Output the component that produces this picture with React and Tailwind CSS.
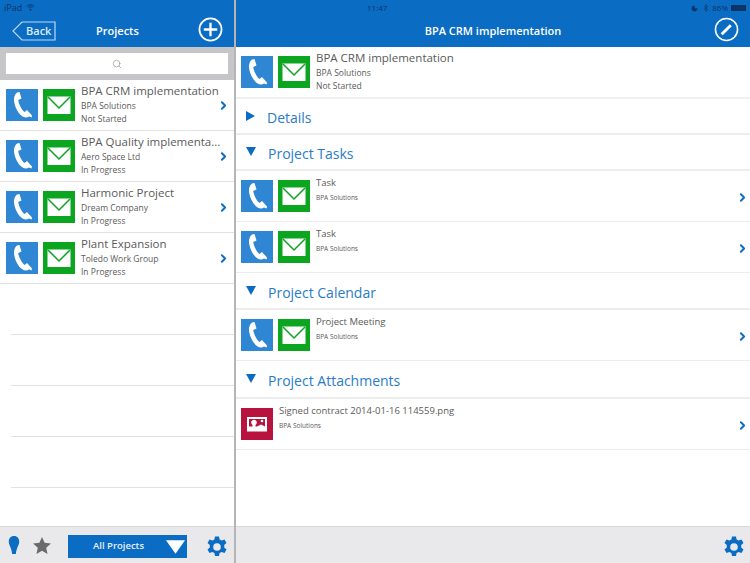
import { ChevronRight, Search, Moon, Bluetooth } from "lucide-react";

const font = { fontFamily: '"Open Sans", "Noto Sans", sans-serif' };

function PhoneIcon() {
  return (
    <div className="w-8 h-8 shrink-0 bg-[#2f86d2] flex items-center justify-center">
      <svg viewBox="0 0 32 32" className="w-8 h-8">
        <path
          d="M11 3.500 C8.500 5.500 7.500 9 8.200 13 C9.200 19 12.500 25 17 27.800 C19.500 29 21.500 28.500 23 27.500 L25.500 28.500 L26 26.500 L21 21 L18.500 23 C15.500 20.500 12.800 15 12.200 11 L15.500 9.500 L13.500 3 Z"
          fill="#fff"
        />
      </svg>
    </div>
  );
}

function MailIcon() {
  return (
    <div className="w-8 h-8 shrink-0 bg-[#0ca520] flex items-center justify-center">
      <svg viewBox="0 0 32 32" className="w-8 h-8">
        <rect x="4.500" y="7.500" width="23" height="17.500" fill="#fff" />
        <path d="M5 8 L16 19 L27 8" fill="none" stroke="#0ca520" strokeWidth="1.500" />
      </svg>
    </div>
  );
}

function ImageIcon() {
  return (
    <div className="w-8 h-8 shrink-0 bg-[#b8123f] flex items-center justify-center">
      <svg viewBox="0 0 32 32" className="w-8 h-8">
        <rect x="6" y="9" width="20" height="14.500" fill="#fff" />
        <rect x="8" y="11" width="16" height="8.500" fill="#b8123f" />
        <path d="M8 20 h16 v-1.500 l-4 -2 l-4 2 h-1.500 v-1.500 a2.800 2.800 0 1 0 -3 0 v1.500 h-3.500 Z" fill="#fff" />
        <circle cx="21" cy="13" r="1.300" fill="#fff" />
      </svg>
    </div>
  );
}

function Gear({ className }) {
  return (
    <svg viewBox="0 0 24 24" className={className}>
      <path
        fillRule="evenodd"
        fill="#0b6cc4"
        d="M10 1.500 h4 l.6 3 a8 8 0 0 1 2 1.100 l2.900 -1 2 3.500 -2.300 2 a8 8 0 0 1 0 2.300 l2.300 2 -2 3.500 -2.900 -1 a8 8 0 0 1 -2 1.100 l-.6 3 h-4 l-.6 -3 a8 8 0 0 1 -2 -1.100 l-2.900 1 -2 -3.500 2.300 -2 a8 8 0 0 1 0 -2.300 l-2.300 -2 2 -3.500 2.900 1 a8 8 0 0 1 2 -1.100 Z M12 8.200 a3.800 3.800 0 1 0 0 7.600 a3.800 3.800 0 1 0 0 -7.600 Z"
      />
    </svg>
  );
}

function ProjectRow({ title, company, status }) {
  return (
    <div className="h-[51px] flex items-center pl-[6px] pr-[4px] border-b border-[#e2e2e2]">
      <div className="flex gap-[5px]">
        <PhoneIcon />
        <MailIcon />
      </div>
      <div className="ml-[6px] flex-1 min-w-0 -mt-[2px] text-[#5a5a5a]">
        <div className="text-[11.500px] leading-[15px] whitespace-nowrap">{title}</div>
        <div className="text-[8.500px] leading-[13px] mt-[1px]">{company}</div>
        <div className="text-[8.500px] leading-[13px]">{status}</div>
      </div>
      <ChevronRight className="w-[13px] h-[13px] text-[#0b6cc4] shrink-0" strokeWidth={3.500} />
    </div>
  );
}

function ItemRow({ title, company, icon }) {
  return (
    <div className="h-[51px] flex items-center pl-[5px] pr-[1px] border-b border-[#ececec]">
      {icon === "image" ? (
        <ImageIcon />
      ) : (
        <div className="flex gap-[5px]">
          <PhoneIcon />
          <MailIcon />
        </div>
      )}
      <div className="ml-[6px] flex-1 self-start pt-[5px] text-[#5a5a5a]">
        <div className="text-[9.500px] leading-[14px]">{title}</div>
        <div className="text-[6.500px] leading-[10px] mt-[3px]">{company}</div>
      </div>
      <ChevronRight className="w-[13px] h-[13px] text-[#0b6cc4] shrink-0 mt-[3px]" strokeWidth={3.500} />
    </div>
  );
}

function Section({ title, open, height }) {
  return (
    <div className={`flex items-center pl-[10px] pt-[3px] border-b-2 border-[#ececec] ${height}`}>
      {open ? (
        <svg viewBox="0 0 10 9" className="w-[10px] h-[9px] -mt-[4px]">
          <path d="M0 0 H10 L5 9 Z" fill="#0b6cc4" />
        </svg>
      ) : (
        <svg viewBox="0 0 9 10" className="w-[9px] h-[10px] -mt-[3px]">
          <path d="M0 0 L9 5 L0 10 Z" fill="#0b6cc4" />
        </svg>
      )}
      <span className="ml-[12px] text-[14px] text-[#2a7cc7]">{title}</span>
    </div>
  );
}

export default function App() {
  return (
    <div style={font} className="w-[750px] h-[563px] flex bg-white overflow-hidden">
      {/* Left panel */}
      <div className="w-[234px] shrink-0 flex flex-col">
        <div className="h-[47px] bg-[#0b6cc4] flex flex-col">
          <div className="h-[15px] flex items-center gap-1 pl-[4px] text-[9px] text-[#0a3566]">
            iPad
            <svg viewBox="0 0 12 9" className="w-[9px] h-[7px]">
              <path d="M1 3 a7 7 0 0 1 10 0 M3 5 a4 4 0 0 1 6 0" fill="none" stroke="#0a3566" strokeWidth="1.300" />
              <circle cx="6" cy="7.400" r="1.200" fill="#0a3566" />
            </svg>
          </div>
          <div className="flex-1 relative">
            <div className="absolute left-[12px] top-[6px] flex items-center">
              <svg viewBox="0 0 44 20" className="w-[44px] h-[20px]">
                <path d="M10 1 H43 V19 H10 L1 10 Z" fill="none" stroke="#bcd9f3" strokeWidth="1.200" />
              </svg>
              <span className="absolute left-[14px] text-[11px] text-[#dcebf8] font-semibold">Back</span>
            </div>
            <div className="absolute left-[96px] top-[8px] text-[11px] font-semibold text-white">Projects</div>
            <svg viewBox="0 0 26 26" className="absolute left-[198px] top-[2px] w-[25px] h-[25px]">
              <circle cx="13" cy="13" r="11.500" fill="none" stroke="#fff" strokeWidth="1.800" />
              <path d="M13 6 V20 M6 13 H20" stroke="#fff" strokeWidth="2.400" />
            </svg>
          </div>
        </div>

        <div className="h-[33px] bg-[#c6c6c8] flex items-center px-[6px]">
          <div className="h-[21px] w-full bg-white flex items-center justify-center">
            <Search className="w-[10px] h-[10px] text-[#a8a8a8]" />
          </div>
        </div>

        <div className="flex-1 flex flex-col">
          <ProjectRow title="BPA CRM implementation" company="BPA Solutions" status="Not Started" />
          <ProjectRow title="BPA Quality implementa..." company="Aero Space Ltd" status="In Progress" />
          <ProjectRow title="Harmonic Project" company="Dream Company" status="In Progress" />
          <ProjectRow title="Plant Expansion" company="Toledo Work Group" status="In Progress" />
          <div className="ml-[11px] flex flex-col">
            {[0, 1, 2, 3].map((i) => (
              <div key={i} className="h-[51px] border-b border-[#e2e2e2]" />
            ))}
          </div>
        </div>

        <div className="h-[37px] bg-[#e9e9ec] border-t border-[#d8d8d8] flex items-center">
          <svg viewBox="0 0 12 20" className="ml-[8px] w-[12px] h-[19px]">
            <path d="M6 0 C2.500 0 .5 2.500 .5 6 C.5 10 3.500 12 4 19 H8 C8.500 12 11.500 10 11.500 6 C11.500 2.500 9.500 0 6 0 Z" fill="#0b6cc4" />
          </svg>
          <svg viewBox="0 0 20 19" className="ml-[13px] w-[18px] h-[17px]">
            <path d="M10 0 L12.900 6.300 L20 7.200 L14.700 11.900 L16.200 19 L10 15.400 L3.800 19 L5.300 11.900 L0 7.200 L7.100 6.300 Z" fill="#6a6a6a" />
          </svg>
          <div className="ml-[17px] mt-[3px] w-[119px] h-[23px] bg-[#0b6cc4] flex items-center relative">
            <span className="ml-[25px] text-[9.500px] font-semibold text-[#e6f0fa]">All Projects</span>
            <svg viewBox="0 0 20 14" className="absolute right-[2px] top-[5px] w-[19px] h-[14px]">
              <path d="M0 0 H20 L10 14 Z" fill="#fff" />
            </svg>
          </div>
          <Gear className="ml-[18px] mt-[3px] w-[24px] h-[24px]" />
        </div>
      </div>

      <div className="w-[2px] shrink-0 bg-[#b5b5b8]" />

      {/* Right panel */}
      <div className="flex-1 flex flex-col min-w-0">
        <div className="h-[47px] bg-[#0b6cc4] relative flex flex-col">
          <div className="h-[15px] flex items-center pl-[131px] text-[8px] text-[#0a3566]">11:47</div>
          <div className="absolute right-[4px] top-[2px] flex items-center gap-[2px] text-[8px] text-[#0a3566]">
            <Moon className="w-[7px] h-[7px] mr-[2px]" fill="#0a3566" />
            <Bluetooth className="w-[8px] h-[8px]" />
            <span>86%</span>
            <div className="w-[15px] h-[6px] bg-[#0a3566] ml-[1px]" />
          </div>
          <div className="flex-1 flex items-center justify-center text-[11px] font-semibold text-white">
            BPA CRM implementation
          </div>
          <svg viewBox="0 0 26 26" className="absolute right-[11px] top-[17px] w-[25px] h-[25px]">
            <circle cx="13" cy="13" r="11.500" fill="none" stroke="#fff" strokeWidth="1.600" />
            <path d="M8 18 L17.500 8.500" stroke="#fff" strokeWidth="3" />
          </svg>
        </div>

        <div className="flex-1 flex flex-col">
          <div className="h-[52px] flex items-center pl-[5px] border-b-2 border-[#f0f0f0]">
            <div className="flex gap-[5px]">
              <PhoneIcon />
              <MailIcon />
            </div>
            <div className="ml-[6px] self-start pt-[3px] text-[#5a5a5a]">
              <div className="text-[11.500px] leading-[15px]">BPA CRM implementation</div>
              <div className="text-[8.500px] leading-[13px] mt-[1px]">BPA Solutions</div>
              <div className="text-[8.500px] leading-[13px]">Not Started</div>
            </div>
          </div>
          <Section title="Details" height="h-[36px]" />
          <Section title="Project Tasks" open height="h-[36px]" />
          <ItemRow title="Task" company="BPA Solutions" />
          <ItemRow title="Task" company="BPA Solutions" />
          <Section title="Project Calendar" open height="h-[37px]" />
          <ItemRow title="Project Meeting" company="BPA Solutions" />
          <Section title="Project Attachments" open height="h-[38px]" />
          <ItemRow title="Signed contract 2014-01-16 114559.png" company="BPA Solutions" icon="image" />
        </div>

        <div className="h-[37px] bg-[#e9e9ec] border-t border-[#d8d8d8] flex items-center justify-end pr-[4px]">
          <Gear className="mt-[3px] w-[24px] h-[24px]" />
        </div>
      </div>
    </div>
  );
}
